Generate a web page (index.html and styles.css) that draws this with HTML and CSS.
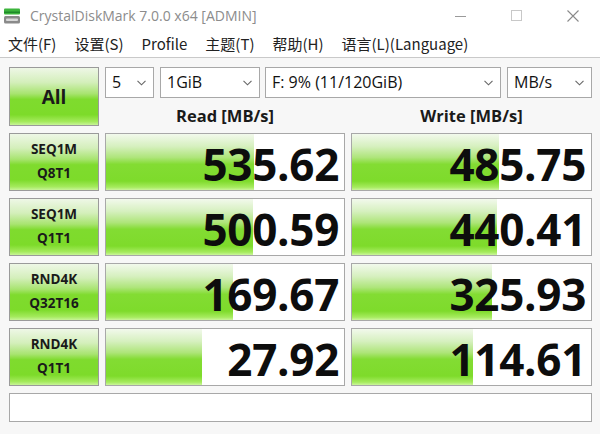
FILE: index.html
```html
<!DOCTYPE html>
<html>
<head>
<meta charset="utf-8">
<link rel="stylesheet" href="styles.css">
</head>
<body>
<div class="window">
  <div class="titlebar">
    <svg class="appicon" width="18" height="16" viewBox="0 0 18 16">
      <rect x="1" y="0.5" width="16" height="6" rx="1" fill="#3cb43c"/>
      <rect x="1" y="3.5" width="16" height="1.5" fill="#1f8a2a"/>
      <rect x="1" y="8" width="16" height="7.5" rx="1.5" fill="#8a8a8a"/>
      <rect x="3" y="10.5" width="12" height="2.5" rx="1" fill="#d8d8d8"/>
    </svg>
    <span class="title">CrystalDiskMark 7.0.0 x64 [ADMIN]</span>
    <div class="controls">
      <svg width="12" height="12" viewBox="0 0 12 12"><line x1="0" y1="6.5" x2="11" y2="6.5" stroke="#9a9a9a" stroke-width="1"/></svg>
      <svg width="12" height="12" viewBox="0 0 12 12"><rect x="0.5" y="0.5" width="10" height="10" fill="none" stroke="#c8c8c8" stroke-width="1"/></svg>
      <svg width="12" height="12" viewBox="0 0 12 12"><path d="M0.5 0.5 L11.5 11.5 M11.5 0.5 L0.5 11.5" stroke="#8a8a8a" stroke-width="1.1"/></svg>
    </div>
  </div>
  <div class="menubar">
    <span>文件(F)</span>
    <span>设置(S)</span>
    <span>Profile</span>
    <span>主题(T)</span>
    <span>帮助(H)</span>
    <span>语言(L)(Language)</span>
  </div>
  <div class="content">
    <div class="top">
      <div class="btn all">All</div>
      <div class="topright">
        <div class="selects">
          <div class="select s-count"><span>5</span><svg class="chev" width="9" height="6" viewBox="0 0 9 6"><path d="M0.5 0.8 L4.5 4.8 L8.5 0.8" fill="none" stroke="#666" stroke-width="1.1"/></svg></div>
          <div class="select s-size"><span>1GiB</span><svg class="chev" width="9" height="6" viewBox="0 0 9 6"><path d="M0.5 0.8 L4.5 4.8 L8.5 0.8" fill="none" stroke="#666" stroke-width="1.1"/></svg></div>
          <div class="select s-drive"><span>F: 9% (11/120GiB)</span><svg class="chev" width="9" height="6" viewBox="0 0 9 6"><path d="M0.5 0.8 L4.5 4.8 L8.5 0.8" fill="none" stroke="#666" stroke-width="1.1"/></svg></div>
          <div class="select s-unit"><span>MB/s</span><svg class="chev" width="9" height="6" viewBox="0 0 9 6"><path d="M0.5 0.8 L4.5 4.8 L8.5 0.8" fill="none" stroke="#666" stroke-width="1.1"/></svg></div>
        </div>
        <div class="headers">
          <div class="hdr read">Read [MB/s]</div>
          <div class="hdr write">Write [MB/s]</div>
        </div>
      </div>
    </div>
    <div class="rows">
      <div class="btn label">SEQ1M<br>Q8T1</div>
      <div class="cell read"><div class="bar" style="width:148px"></div><span class="val">535.62</span></div>
      <div class="cell write"><div class="bar" style="width:147px"></div><span class="val">485.75</span></div>

      <div class="btn label">SEQ1M<br>Q1T1</div>
      <div class="cell read"><div class="bar" style="width:147px"></div><span class="val">500.59</span></div>
      <div class="cell write"><div class="bar" style="width:145px"></div><span class="val">440.41</span></div>

      <div class="btn label">RND4K<br>Q32T16</div>
      <div class="cell read"><div class="bar" style="width:127px"></div><span class="val">169.67</span></div>
      <div class="cell write"><div class="bar" style="width:140px"></div><span class="val">325.93</span></div>

      <div class="btn label">RND4K<br>Q1T1</div>
      <div class="cell read"><div class="bar" style="width:96px"></div><span class="val">27.92</span></div>
      <div class="cell write"><div class="bar" style="width:121px"></div><span class="val">114.61</span></div>
    </div>
    <div class="status"></div>
  </div>
</div>
</body>
</html>
```

FILE: styles.css
```css
* { box-sizing: border-box; }
html, body { margin: 0; padding: 0; }
body {
  width: 600px;
  height: 434px;
  overflow: hidden;
  background: #f7f7f7;
  font-family: "Open Sans", "Noto Sans CJK SC", sans-serif;
}
.window { width: 600px; height: 434px; display: flex; flex-direction: column; }

.titlebar {
  height: 31px;
  background: #ffffff;
  display: flex;
  align-items: center;
  padding-left: 3px;
}
.appicon { margin-right: 9px; margin-top: 1px; }
.title {
  font-family: "Open Sans", sans-serif;
  font-size: 14px;
  color: #8c8c8c;
}
.controls {
  margin-left: auto;
  display: flex;
  align-items: center;
  gap: 44px;
  padding-right: 21px;
}

.menubar {
  height: 27px;
  background: #ffffff;
  border-bottom: 1px solid #c9c9c9;
  display: flex;
  align-items: center;
  padding-left: 8px;
  gap: 18px;
  font-family: "Noto Sans CJK SC", sans-serif;
  font-size: 15px;
  color: #222;
}
.menubar span { line-height: 1; margin-top: -1px; }

.content {
  padding: 9px 8px 0 9px;
  display: flex;
  flex-direction: column;
}

.btn {
  border: 1px solid #9a9a9a;
  background: linear-gradient(to bottom, #eef7e6 0%, #d4efbb 25%, #a8e470 45%, #7fdb2e 55%, #7ddb2a 82%, #a4ea5c 94%, #c8f498 100%);
  display: flex;
  align-items: center;
  justify-content: center;
  text-align: center;
  color: #1a1a1a;
  font-weight: 700;
}
.top { display: flex; gap: 6px; }
.all {
  width: 90px;
  height: 59px;
  font-size: 19px;
}
.topright { display: flex; flex-direction: column; }
.selects { display: flex; height: 31px; gap: 6px; }
.select {
  height: 31px;
  border: 1px solid #a8a8a8;
  background: #ffffff;
  display: flex;
  align-items: center;
  justify-content: space-between;
  padding: 0 7px 0 6px;
  font-size: 16px;
  color: #111;
}
.select span { margin-top: -1px; }
.s-count { width: 49px; }
.s-size { width: 100px; }
.s-drive { width: 236px; margin-left: -1px; }
.s-unit { width: 85px; }

.headers { display: flex; gap: 6px; height: 28px; }
.hdr {
  font-size: 16.5px;
  font-weight: 700;
  color: #1a1a1a;
  display: flex;
  align-items: center;
  justify-content: center;
  padding-top: 7px;
}
.hdr.read { width: 240px; }
.hdr.write { width: 241px; }

.rows {
  margin-top: 7px;
  display: grid;
  grid-template-columns: 90px 240px 241px;
  grid-auto-rows: 58px;
  column-gap: 6px;
  row-gap: 7px;
}
.label {
  font-size: 13.5px;
  line-height: 24px;
  padding-bottom: 2px;
}
.cell {
  position: relative;
  border: 1px solid #a8a8a8;
  background: #ffffff;
  display: flex;
  align-items: center;
  justify-content: flex-end;
  padding-right: 5px;
}
.bar {
  position: absolute;
  left: 0;
  top: 0;
  bottom: 0;
  background: linear-gradient(to bottom, #f2f9ec 0%, #d6f0bf 22%, #aee57a 42%, #83dc33 54%, #7edb2b 84%, #a6eb5e 95%, #cbf59c 100%);
}
.val {
  position: relative;
  font-size: 44px;
  font-weight: 700;
  color: #0d0d0d;
  line-height: 54px;
  margin-top: 3px;
  letter-spacing: -0.3px;
}

.status {
  margin-top: 7px;
  width: 583px;
  height: 29px;
  border: 1px solid #a8a8a8;
  background: #ffffff;
}
```
